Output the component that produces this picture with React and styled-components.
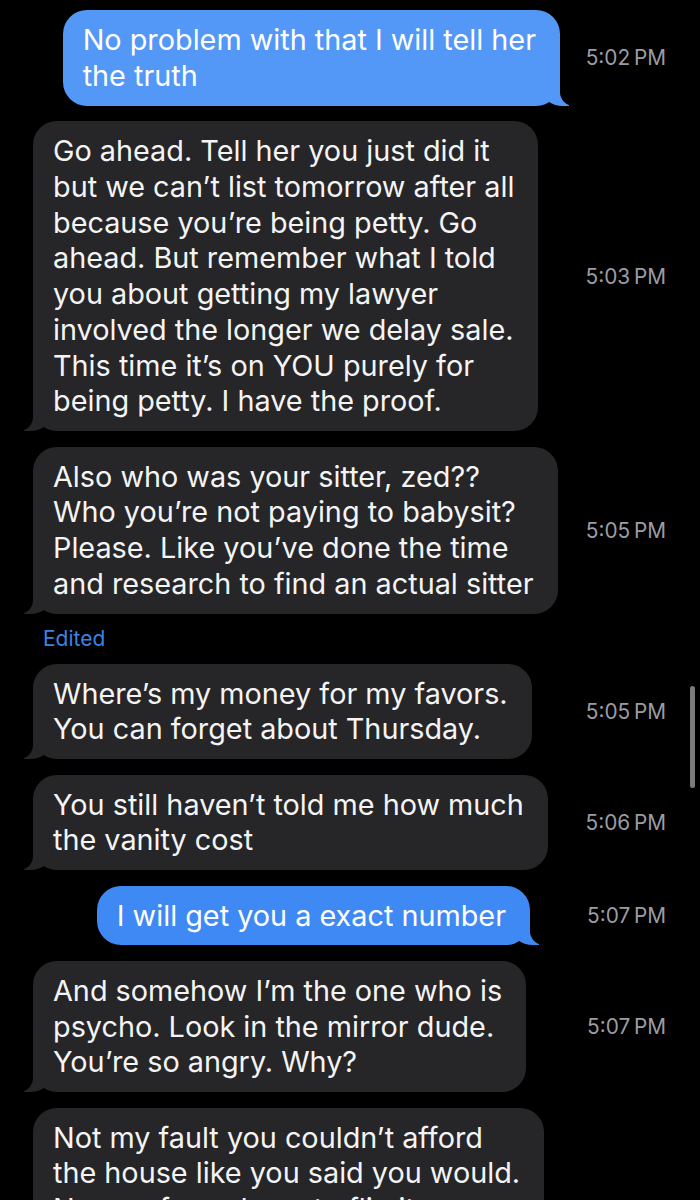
import React from "react";
import styled, { createGlobalStyle, css } from "styled-components";

const Global = createGlobalStyle`
  html, body { margin: 0; padding: 0; background: #000; }
  body { font-family: Inter, "Noto Sans", "Liberation Sans", sans-serif; -webkit-font-smoothing: antialiased; }
  #root { background: #000; min-height: 1200px; overflow: hidden; }
`;

const Thread = styled.div`
  display: flex;
  flex-direction: column;
  gap: 15.5px;
  padding-top: 10px;
  height: 1200px;
  overflow: hidden;
  box-sizing: border-box;
`;

const Row = styled.div`
  display: grid;
  grid-template-columns: 1fr 128px;
  align-items: center;
`;

const MessageCell = styled.div`
  display: flex;
  justify-content: ${(p) => (p.$out ? "flex-end" : "flex-start")};
  padding-left: ${(p) => (p.$out ? 0 : 33)}px;
  padding-right: ${(p) => (p.$out ? p.$shift : 0)}px;
`;

const tailIn = css`
  &::before {
    content: "";
    position: absolute;
    bottom: 0;
    left: -9px;
    width: 28px;
    height: 34px;
    background: ${(p) => p.$bg};
    border-bottom-right-radius: 22px 18px;
  }
  &::after {
    content: "";
    position: absolute;
    bottom: 0;
    left: -36px;
    width: 36px;
    height: 34px;
    background: #000;
    border-bottom-right-radius: 14px;
  }
`;

const tailOut = css`
  &::before {
    content: "";
    position: absolute;
    bottom: 0;
    right: -9px;
    width: 28px;
    height: 34px;
    background: ${(p) => p.$bg};
    border-bottom-left-radius: 22px 18px;
  }
  &::after {
    content: "";
    position: absolute;
    bottom: 0;
    right: -36px;
    width: 36px;
    height: 34px;
    background: #000;
    border-bottom-left-radius: 14px;
  }
`;

const Bubble = styled.div`
  position: relative;
  background: ${(p) => p.$bg};
  color: ${(p) => (p.$out ? "#ffffff" : "#f4f4f5")};
  border-radius: 24px;
  padding: 12px 24px 12px 20px;
  font-size: 28.8px;
  line-height: 35.75px;
  letter-spacing: 0;
  white-space: nowrap;
  ${(p) => (p.$out ? tailOut : tailIn)}
`;

const Text = styled.span`
  position: relative;
  z-index: 1;
`;

const Stamp = styled.div`
  text-align: right;
  padding-right: 34px;
  color: #9c9ca1;
  font-size: 20.8px;
  letter-spacing: 0;
`;

const Edited = styled.div`
  padding-left: 43px;
  color: #3d82e6;
  font-size: 21px;
  line-height: 19px;
`;

const Scrollbar = styled.div`
  position: fixed;
  top: 686px;
  right: 5px;
  width: 5px;
  height: 102px;
  border-radius: 3px;
  background: #7b7b7e;
`;

const GRAY = "#262628";

const messages = [
  { out: true, bg: "#5397f7", shift: 12, time: "5:02\u202FPM", lines: ["No problem with that I will tell her", "the truth"] },
  {
    bg: GRAY,
    time: "5:03\u202FPM",
    lines: [
      "Go ahead. Tell her you just did it",
      "but we can’t list tomorrow after all",
      "because you’re being petty. Go",
      "ahead. But remember what I told",
      "you about getting my lawyer",
      "involved the longer we delay sale.",
      "This time it’s on YOU purely for",
      "being petty. I have the proof.",
    ],
  },
  {
    bg: GRAY,
    time: "5:05\u202FPM",
    lines: [
      "Also who was your sitter, zed??",
      "Who you’re not paying to babysit?",
      "Please. Like you’ve done the time",
      "and research to find an actual sitter",
    ],
  },
  { edited: true },
  { bg: GRAY, time: "5:05\u202FPM", lines: ["Where’s my money for my favors.", "You can forget about Thursday."] },
  { bg: GRAY, time: "5:06\u202FPM", lines: ["You still haven’t told me how much", "the vanity cost"] },
  { out: true, bg: "#3f89f5", shift: 42, time: "5:07\u202FPM", lines: ["I will get you a exact number"] },
  {
    bg: GRAY,
    time: "5:07\u202FPM",
    lines: ["And somehow I’m the one who is", "psycho. Look in the mirror dude.", "You’re so angry. Why?"],
  },
  {
    bg: GRAY,
    time: "",
    lines: ["Not my fault you couldn’t afford", "the house like you said you would.", "No one forced you to flip it."],
  },
];

function Message({ m }) {
  return (
    <Row>
      <MessageCell $out={m.out} $shift={m.shift || 0}>
        <Bubble $out={m.out} $bg={m.bg}>
          <Text>
            {m.lines.map((l, i) => (
              <React.Fragment key={i}>
                {i > 0 && <br />}
                {l}
              </React.Fragment>
            ))}
          </Text>
        </Bubble>
      </MessageCell>
      <Stamp>{m.time}</Stamp>
    </Row>
  );
}

export default function App() {
  return (
    <>
      <Global />
      <Thread>
        {messages.map((m, i) => (m.edited ? <Edited key={i}>Edited</Edited> : <Message key={i} m={m} />))}
      </Thread>
      <Scrollbar />
    </>
  );
}
